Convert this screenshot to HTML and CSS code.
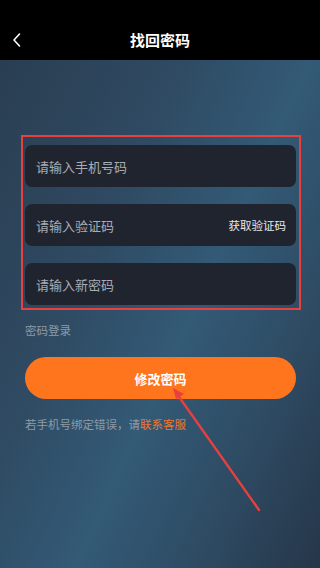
FILE: index.html
```html
<!DOCTYPE html>
<html lang="zh-CN">
<head>
    <meta charset="UTF-8">
    <meta name="viewport" content="width=device-width, initial-scale=1.0">
    <title>找回密码</title>
    <link rel="stylesheet" href="styles.css">
</head>
<body>
    <header class="TopBar">
        <span class="TopBar-back">
            <svg width="10" height="16" viewBox="0 0 10 16">
                <path d="M7.5 2 L2 8 L7.5 14" fill="none" stroke="#fff" stroke-width="1.6" stroke-linecap="round" stroke-linejoin="round"/>
            </svg>
        </span>
        <h1 class="TopBar-title">找回密码</h1>
    </header>

    <main class="Page">
        <div class="Mark">
            <div class="Field">
                <span class="Field-hint">请输入手机号码</span>
            </div>
            <div class="Field">
                <span class="Field-hint">请输入验证码</span>
                <span class="Field-action">获取验证码</span>
            </div>
            <div class="Field">
                <span class="Field-hint">请输入新密码</span>
            </div>
        </div>

        <p class="Switch">密码登录</p>

        <button class="Submit">修改密码</button>

        <p class="Help">若手机号绑定错误，请<span class="Help-link">联系客服</span></p>

        <!-- flecha de anotación -->
        <svg class="Arrow" width="320" height="568" viewBox="0 0 320 568">
            <line x1="259" y1="510" x2="177" y2="394" stroke="#e8403f" stroke-width="2.4" stroke-linecap="round"/>
            <path d="M173 388 L184 394 L176 399 Z" fill="#e8403f"/>
        </svg>
    </main>
</body>
</html>
```

FILE: styles.css
```css
html,
body {
  margin: 0;
  height: 100%;
  overflow: hidden;
}

body {
  font-family: "Noto Sans CJK SC", "Noto Sans", sans-serif;
  background: linear-gradient(115deg, #293c4f 0%, #2f4a62 35%, #335a76 58%, #2e4b63 78%, #263649 100%);
  color: #fff;
}

.TopBar {
  height: 60px;
  background: #000;
  display: flex;
  align-items: flex-end;
  justify-content: center;
  position: relative;
}

.TopBar-title {
  margin: 0 0 9px;
  font-size: 15px;
  font-weight: bold;
  line-height: 22px;
}

.TopBar-back {
  position: absolute;
  left: 12px;
  bottom: 12px;
  display: flex;
}

.Page {
  position: relative;
  height: 508px;
  padding: 75px 0 0;
  box-sizing: border-box;
}

.Mark {
  margin-left: 21px;
  width: 280px;
  border: 2px solid #e8403f;
  box-sizing: border-box;
  padding: 8px 3px 3px 2px;
  display: flex;
  flex-direction: column;
  gap: 17px;
}

.Field {
  height: 42px;
  border-radius: 7px;
  background: #20242f;
  display: flex;
  align-items: center;
  justify-content: space-between;
  padding: 0 10px 0 11px;
}

.Field-hint {
  font-size: 13px;
  color: #a9adb4;
}

.Field-action {
  font-size: 11.5px;
  color: #e6e8ea;
}

.Switch {
  margin: 12px 0 0 25px;
  font-size: 11.5px;
  line-height: 17px;
  color: #8f9aa5;
}

.Submit {
  display: block;
  margin: 18px 0 0 25px;
  width: 271px;
  height: 42px;
  border: 0;
  border-radius: 21px;
  background: #ff751e;
  color: #fff;
  font-family: inherit;
  font-size: 13px;
  font-weight: bold;
}

.Help {
  margin: 17px 0 0 25px;
  font-size: 11.5px;
  line-height: 17px;
  color: #8f9aa5;
}

.Help-link {
  color: #f0762a;
}

.Arrow {
  position: absolute;
  left: 0;
  top: -60px;
  pointer-events: none;
}
```
